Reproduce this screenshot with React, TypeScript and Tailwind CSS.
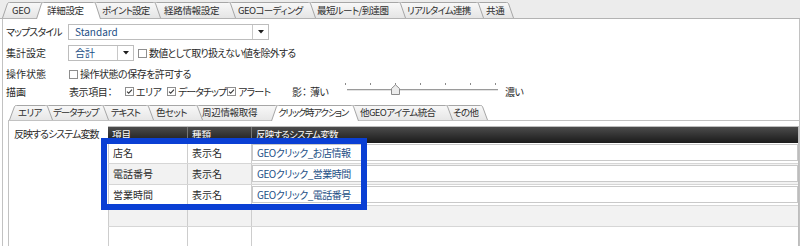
import React from "react";

type TabDef = { label: string; w: string; px: number; z: string; pl: string; sel?: boolean; tr?: string };

const TABS1: TabDef[] = [
  { label: "GEO", w: "w-[34px]", px: 34, z: "z-[9]", pl: "pl-[4px]" },
  { label: "詳細設定", w: "w-[53px]", px: 53, z: "z-[20]", pl: "pl-[5px]", sel: true },
  { label: "ポイント設定", w: "w-[60px]", px: 60, z: "z-[7]", pl: "pl-[7px]", tr: "tracking-[-0.8px]" },
  { label: "経路情報設定", w: "w-[75px]", px: 75, z: "z-[6]", pl: "pl-[9px]" },
  { label: "GEOコーディング", w: "w-[80px]", px: 80, z: "z-[5]", pl: "pl-[8px]", tr: "tracking-[-0.6px]" },
  { label: "最短ルート/到達圏", w: "w-[90px]", px: 90, z: "z-[4]", pl: "pl-[7px]", tr: "tracking-[-0.6px]" },
  { label: "リアルタイム連携", w: "w-[78px]", px: 78, z: "z-[3]", pl: "pl-[7px]", tr: "tracking-[-0.8px]" },
  { label: "共通", w: "w-[30px]", px: 30, z: "z-[2]", pl: "pl-[8px]" },
];

const TABS2: TabDef[] = [
  { label: "エリア", w: "w-[32px]", px: 32, z: "z-[9]", pl: "pl-[3px]", tr: "tracking-[-0.6px]" },
  { label: "データチップ", w: "w-[56px]", px: 56, z: "z-[8]", pl: "pl-[6px]", tr: "tracking-[-1px]" },
  { label: "テキスト", w: "w-[45px]", px: 45, z: "z-[7]", pl: "pl-[8px]", tr: "tracking-[-1px]" },
  { label: "色セット", w: "w-[49px]", px: 49, z: "z-[6]", pl: "pl-[8px]", tr: "tracking-[-0.6px]" },
  { label: "周辺情報取得", w: "w-[80px]", px: 80, z: "z-[5]", pl: "pl-[5px]" },
  { label: "クリック時アクション", w: "w-[76px]", px: 76, z: "z-[20]", pl: "pl-[1px]", sel: true, tr: "tracking-[-1.3px]" },
  { label: "他GEOアイテム統合", w: "w-[94px]", px: 94, z: "z-[3]", pl: "pl-[7px]", tr: "tracking-[-0.6px]" },
  { label: "その他", w: "w-[35px]", px: 35, z: "z-[2]", pl: "pl-[6px]", tr: "tracking-[-0.6px]" },
];

function Tab({ t, h, fill, id }: { t: TabDef; h: number; fill: string; id: string }) {
  const s = 6;
  const hh = t.sel ? h + 1 : h;
  const W = t.px + 2 * s;
  const outline = `M0.5 ${hh} L${s - 0.5} 1.5 Q${s} 0.5 ${s + 1.5} 0.5 L${t.px + s - 1.5} 0.5 Q${t.px + s} 0.5 ${t.px + s + 0.5} 1.5 L${W - 0.5} ${hh}`;
  const area = `${outline} Z`;
  const gid = `tabg-${id}`;
  return (
    <div className={`relative h-full shrink-0 ${t.w} ${t.z}`}>
      <svg className="absolute left-[-6px] top-0 overflow-visible" width={W} height={hh}>
        <defs>
          <linearGradient id={gid} x1="0" y1="0" x2="0" y2="1">
            <stop offset="0" stopColor={t.sel ? "#ffffff" : "#f8f8f8"} />
            <stop offset="1" stopColor={t.sel ? "#ffffff" : fill} />
          </linearGradient>
        </defs>
        <path d={area} fill={`url(#${gid})`} />
        <path d={outline} fill="none" stroke="#a6a6a6" strokeWidth="1" />
      </svg>
      <span className={`relative flex h-full items-center text-[9.5px] ${t.pl} ${t.tr ?? "tracking-[-0.3px]"} pt-[1px] text-[#2e2e2e]`}>
        {t.label}
      </span>
    </div>
  );
}

function Check({ checked }: { checked?: boolean }) {
  return (
    <span className="flex h-[9px] w-[9px] shrink-0 items-center justify-center border border-[#8e8e8e] bg-white">
      {checked && (
        <svg width="7" height="7" viewBox="0 0 7 7">
          <path d="M1 3.6 L2.7 5.2 L6 1.6" fill="none" stroke="#3a3a3a" strokeWidth="1.1" />
        </svg>
      )}
    </span>
  );
}

function Arrow() {
  return (
    <svg width="6" height="4" viewBox="0 0 6 4">
      <path d="M0 0 L6 0 L3 3.5 Z" fill="#1e1e1e" />
    </svg>
  );
}

function Slider() {
  const ticks = [3, 28, 53, 78, 103, 128, 153];
  return (
    <svg width="160" height="17" viewBox="0 0 160 17" className="shrink-0">
      {ticks.map((x) => (
        <line key={x} x1={x + 0.5} y1="0" x2={x + 0.5} y2="2" stroke="#8a8a8a" strokeWidth="1" />
      ))}
      <line x1="5" y1="6.5" x2="156" y2="6.5" stroke="#9a9a9a" strokeWidth="1" />
      <line x1="5" y1="7.5" x2="156" y2="7.5" stroke="#e2e2e2" strokeWidth="1" />
      <path d="M49.5 11.5 L49.5 5.5 L53.5 1.8 L57.5 5.5 L57.5 11.5 Z" fill="#ececec" stroke="#8c8c8c" strokeWidth="1" />
    </svg>
  );
}

const ROWS = [
  { a: "店名", b: "表示名", c: "GEOクリック_お店情報", box: true },
  { a: "電話番号", b: "表示名", c: "GEOクリック_営業時間", box: true },
  { a: "営業時間", b: "表示名", c: "GEOクリック_電話番号", box: true },
  { a: "", b: "", c: "", box: false },
  { a: "", b: "", c: "", box: false },
];

export default function App() {
  return (
    <div className="relative flex h-[246px] w-[800px] flex-col overflow-hidden whitespace-nowrap bg-white font-['Noto_Sans_CJK_JP','Noto_Sans',sans-serif] text-[10px] leading-none text-[#2b2b2b] [font-feature-settings:'palt']">
      {/* top tab strip */}
      <div className="relative z-10 flex h-[19px] shrink-0 items-end border-b border-[#b3b3b3] bg-[#ececec] pl-[8px]">
        <div className="flex h-[16px]">
          {TABS1.map((t, i) => (
            <Tab key={t.label} t={t} h={16} fill="#e5e5e5" id={`a${i}`} />
          ))}
        </div>
      </div>

      {/* page */}
      <div className="ml-[2px] flex w-[798px] flex-1 flex-col border-l border-r border-[#c2c2c2] pl-[3px] pt-[5px]">
        {/* row 1 */}
        <div className="flex h-[16px] items-center">
          <span className="w-[62px] shrink-0 tracking-[-0.9px]">マップスタイル</span>
          <div className="flex h-[16px] w-[201px] items-stretch border border-[#bdbdbd] bg-white">
            <span className="flex flex-1 items-center pl-[6px] text-[#1d4f86]">Standard</span>
            <span className="flex w-[16px] items-center justify-center border-l border-[#c8c8c8]">
              <Arrow />
            </span>
          </div>
        </div>

        {/* row 2 */}
        <div className="mt-[5px] flex h-[16px] items-center">
          <span className="w-[62px] shrink-0">集計設定</span>
          <div className="flex h-[16px] w-[66px] items-stretch border border-[#bdbdbd] bg-white">
            <span className="flex flex-1 items-center pl-[6px] text-[#1d4f86]">合計</span>
            <span className="flex w-[16px] items-center justify-center border-l border-[#c8c8c8]">
              <Arrow />
            </span>
          </div>
          <span className="ml-[4px] flex items-center">
            <Check />
            <span className="ml-[2px] tracking-[-0.8px]">数値として取り扱えない値を除外する</span>
          </span>
        </div>

        {/* row 3 */}
        <div className="mt-[5px] flex h-[16px] items-center">
          <span className="w-[63px] shrink-0">操作状態</span>
          <Check />
          <span className="ml-[2px] tracking-[-0.5px]">操作状態の保存を許可する</span>
        </div>

        {/* row 4 */}
        <div className="mt-[1px] flex h-[17px] items-center">
          <span className="w-[63px] shrink-0">描画</span>
          <span className="w-[56px] shrink-0 tracking-[-0.4px]">表示項目：</span>
          <span className="flex w-[42px] shrink-0 items-center">
            <Check checked />
            <span className="ml-[2px] tracking-[-0.6px]">エリア</span>
          </span>
          <span className="flex w-[60px] shrink-0 items-center">
            <Check checked />
            <span className="ml-[2px] tracking-[-1px]">データチップ</span>
          </span>
          <span className="flex w-[65px] shrink-0 items-center">
            <Check checked />
            <span className="ml-[2px] tracking-[-0.8px]">アラート</span>
          </span>
          <span className="w-[18px] shrink-0">影：</span>
          <span className="w-[32px] shrink-0 tracking-[-0.6px]">薄い</span>
          <span className="flex h-[17px] items-start">
            <Slider />
          </span>
          <span className="ml-[3px] tracking-[-0.6px]">濃い</span>
        </div>

        {/* inner tab control */}
        <div className="ml-[2px] mt-[4px] flex flex-1 flex-col">
          <div className="relative z-10 flex h-[17px] shrink-0 items-end border-b border-[#c2c2c2] pl-[7px]">
            <div className="flex h-[15px]">
              {TABS2.map((t, i) => (
                <Tab key={t.label} t={t} h={15} fill="#e7e7e7" id={`b${i}`} />
              ))}
            </div>
          </div>
          <div className="flex flex-1 border-l border-[#c2c2c2] pt-[5px]">
            <span className="w-[99px] shrink-0 pl-[5px] pt-[3px] tracking-[-1px]">反映するシステム変数</span>
            <div className="relative flex flex-1 flex-col border-r border-[#bdbdbd]">
              {/* header */}
              <div className="flex h-[17px] shrink-0 border-t border-[#bdbdbd] bg-linear-to-b from-[#4c4c4c] to-[#1b1b1b] text-[9.5px] text-white">
                <span className="flex w-[80px] items-center border-r border-[#777] pl-[4px]">項目</span>
                <span className="flex w-[64px] items-center border-r border-[#777] pl-[4px]">種類</span>
                <span className="flex flex-1 items-center pl-[4px] tracking-[-0.8px]">反映するシステム変数</span>
              </div>
              {ROWS.map((r, i) => (
                <div
                  key={i}
                  className={`flex h-[21px] shrink-0 border-b border-[#d6d6d6] ${i % 2 === 1 ? "bg-[#f2f2f2]" : "bg-white"}`}
                >
                  <span className="flex w-[80px] items-center border-l border-r border-[#cdcdcd] pl-[4px]">{r.a}</span>
                  <span className="flex w-[64px] items-center border-r border-[#cdcdcd] pl-[4px]">{r.b}</span>
                  <span className="flex flex-1 items-start">
                    {r.box && (
                      <span className="mt-[1px] flex h-[17px] flex-1 items-center border border-[#c9c9c9] bg-white pl-[4px] tracking-[-0.5px] text-[#1d4f86]">
                        {r.c}
                      </span>
                    )}
                  </span>
                </div>
              ))}
              {/* blue highlight */}
              <div className="pointer-events-none absolute left-[-7px] top-[12px] h-[72px] w-[266px] border-[6px] border-[#0a3fd4]" />
            </div>
          </div>
        </div>
      </div>
    </div>
  );
}
